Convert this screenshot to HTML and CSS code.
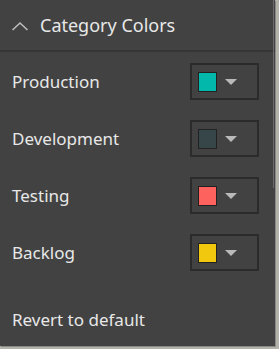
FILE: index.html
```html
<!DOCTYPE html>
<html>
<head>
<meta charset="utf-8">
<link rel="stylesheet" href="styles.css">
</head>
<body>
<div class="panel">
  <div class="header">
    <svg class="chev" width="18" height="10" viewBox="0 0 18 10"><path d="M1.5 9 L9 2 L16.5 9" fill="none" stroke="#bdbdbd" stroke-width="1.6"/></svg>
    <span class="title">Category Colors</span>
  </div>
  <div class="rows">
    <div class="row">
      <span class="label">Production</span>
      <div class="picker"><span class="swatch" style="background:#01b8aa"></span><span class="arrow"></span></div>
    </div>
    <div class="row">
      <span class="label">Development</span>
      <div class="picker"><span class="swatch" style="background:#374649"></span><span class="arrow"></span></div>
    </div>
    <div class="row">
      <span class="label">Testing</span>
      <div class="picker"><span class="swatch" style="background:#fd625e"></span><span class="arrow"></span></div>
    </div>
    <div class="row">
      <span class="label">Backlog</span>
      <div class="picker"><span class="swatch" style="background:#f2c80f"></span><span class="arrow"></span></div>
    </div>
  </div>
  <div class="revert">Revert to default</div>
  <div class="scrollbar"></div>
</div>
</body>
</html>
```
FILE: styles.css
```css
html, body {
  margin: 0;
  padding: 0;
  background: #b3b3ab;
  width: 279px;
  height: 349px;
  overflow: hidden;
}
.panel {
  position: relative;
  width: 275px;
  height: 346px;
  background: #424242;
  box-shadow: 1px 1px 0 #8a8a84;
  font-family: "Noto Sans", "Open Sans", sans-serif;
  color: #e8e8e8;
  display: flex;
  flex-direction: column;
}
.header {
  height: 52px;
  border-bottom: 2px solid #363636;
  display: flex;
  align-items: center;
  box-sizing: border-box;
  padding: 0 0 0 11px;
  gap: 11px;
}
.chev { display: block; margin-top: 2px; }
.title { font-size: 18px; }
.rows {
  display: flex;
  flex-direction: column;
  gap: 20px;
  padding-top: 11px;
}
.row {
  height: 37px;
  display: flex;
  align-items: center;
  justify-content: space-between;
  padding: 0 16px 0 12px;
}
.label { font-size: 17px; }
.picker {
  width: 69px;
  height: 37px;
  box-sizing: border-box;
  border: 2px solid #2b2b2b;
  display: flex;
  align-items: center;
  padding-left: 6px;
  gap: 8px;
}
.swatch {
  width: 19px;
  height: 20px;
  box-sizing: border-box;
  border: 1px solid #222;
}
.arrow {
  width: 0;
  height: 0;
  border-left: 6px solid transparent;
  border-right: 6px solid transparent;
  border-top: 6px solid #b9b9b9;
  margin-top: 1px;
}
.revert {
  font-size: 17px;
  padding: 37px 0 0 12px;
}
.scrollbar {
  position: absolute;
  right: 1px;
  top: 0;
  width: 1px;
  height: 188px;
  background: #6a6a6a;
}
```
